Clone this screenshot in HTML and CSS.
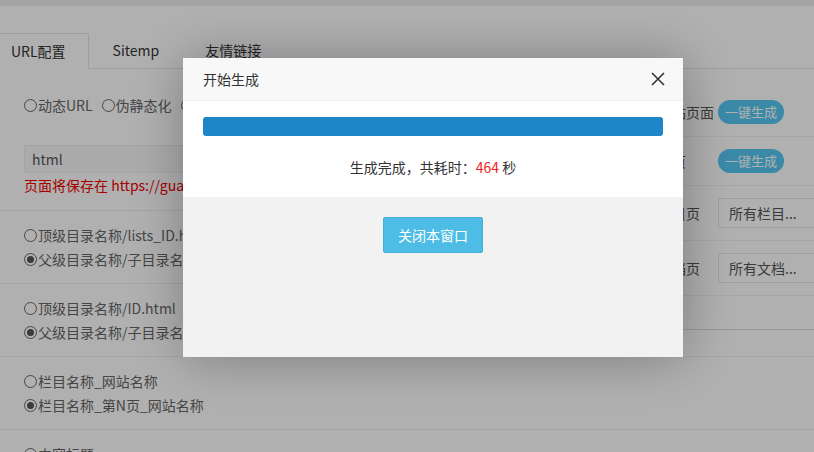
FILE: index.html
```html
<!DOCTYPE html>
<html lang="zh-CN">
<head>
<meta charset="utf-8">
<title>URL配置</title>
<link rel="stylesheet" href="styles.css">
</head>
<body>
<div class="topbar"></div>
<div class="page">
  <ul class="tabs">
    <li class="tab active">URL配置</li>
    <li class="tab">Sitemp</li>
    <li class="tab">友情链接</li>
  </ul>
  <div class="content">
    <div class="row row-first">
      <div class="line">
        <label class="opt"><span class="radio"></span>动态URL</label>
        <label class="opt"><span class="radio"></span>伪静态化</label>
        <label class="opt"><span class="radio on"></span>生成静态</label>
      </div>
      <div class="input">html</div>
      <div class="line red">页面将保存在 https://guanwang.cn/html/</div>
    </div>
    <div class="row">
      <div class="line"><label class="opt"><span class="radio"></span>顶级目录名称/lists_ID.html</label></div>
      <div class="line"><label class="opt"><span class="radio on"></span>父级目录名称/子目录名称/lists_ID.html</label></div>
    </div>
    <div class="row">
      <div class="line"><label class="opt"><span class="radio"></span>顶级目录名称/ID.html</label></div>
      <div class="line"><label class="opt"><span class="radio on"></span>父级目录名称/子目录名称/ID.html</label></div>
    </div>
    <div class="row">
      <div class="line"><label class="opt"><span class="radio"></span>栏目名称_网站名称</label></div>
      <div class="line"><label class="opt"><span class="radio on"></span>栏目名称_第N页_网站名称</label></div>
    </div>
    <div class="row">
      <div class="line"><label class="opt"><span class="radio"></span>内容标题</label></div>
      <div class="line"><label class="opt"><span class="radio on"></span>内容标题_栏目名称_网站名称</label></div>
    </div>

    <aside class="side">
      <div class="side-row"><span class="side-label">生成全站页面</span><span class="pill">一键生成</span></div>
      <div class="side-row"><span class="side-label">生成首页</span><span class="pill">一键生成</span></div>
      <div class="side-row"><span class="side-label">生成栏目页</span><span class="select">所有栏目...</span></div>
      <div class="side-row"><span class="side-label">生成文档页</span><span class="select">所有文档...</span></div>
    </aside>
  </div>
</div>

<div class="mask"></div>
<div class="layer">
  <div class="layer-title">开始生成
    <svg class="close" width="14" height="14" viewBox="0 0 14 14"><path d="M1 1 L13 13 M13 1 L1 13" stroke="#333" stroke-width="1.6" fill="none"/></svg>
  </div>
  <div class="layer-body">
    <div class="bar"></div>
    <div class="done">生成完成，共耗时：<span class="num">464</span> 秒</div>
  </div>
  <div class="layer-foot">
    <span class="btn">关闭本窗口</span>
  </div>
</div>
</body>
</html>
```

FILE: styles.css
```css
* { box-sizing: border-box; }
html, body { margin: 0; padding: 0; }
body {
  background: #fff;
  font-family: "Noto Sans CJK SC", "Noto Sans", sans-serif;
  font-size: 14px;
  color: #666;
  overflow: hidden;
  width: 814px;
  height: 452px;
}
.topbar { height: 6px; background: #eee; }
.page { padding-top: 27px; }
.tabs {
  list-style: none;
  margin: 0 0 0 -12px;
  padding: 0;
  display: flex;
  height: 36px;
  border-bottom: 1px solid #e6e6e6;
}
.tab {
  height: 36px;
  line-height: 34px;
  padding: 0 22px;
  color: #333;
  font-size: 14px;
  margin-right: 2px;
}
.tab.active {
  background: #fff;
  border: 1px solid #e2e2e2;
  border-bottom-color: #fff;
  border-radius: 2px 2px 0 0;
  height: 36px;
}
.content { position: relative; }
.row {
  padding: 12px 24px;
  border-bottom: 1px solid #eee;
}
.row-first { padding-top: 24px; padding-bottom: 13px; }
.line {
  height: 24px;
  line-height: 24px;
  white-space: nowrap;
  display: flex;
  align-items: center;
}
.opt { display: inline-flex; align-items: center; margin-right: 9px; }
.radio {
  width: 13px;
  height: 13px;
  border: 1px solid #666;
  border-radius: 50%;
  display: inline-flex;
  align-items: center;
  justify-content: center;
  margin-right: 1px;
  background: #fff;
}
.radio.on::after {
  content: "";
  width: 7px;
  height: 7px;
  border-radius: 50%;
  background: #555;
}
.input {
  margin-top: 28px;
  width: 420px;
  height: 28px;
  line-height: 26px;
  border: 1px solid #eee;
  background: #f8f8f8;
  border-radius: 2px;
  padding: 0 7px;
  color: #555;
}
.red { color: #e00; }

.side {
  position: absolute;
  top: 19px;
  right: 0;
  width: 200px;
  background: #fff;
  padding: 0 0 33px 16px;
  border-bottom: 1px solid #ddd;
}
.side-row {
  display: flex;
  align-items: center;
  padding: 12px 0;
  border-bottom: 1px solid #f0f0f0;
}
.side-label { width: 88px; flex: none; color: #555; white-space: nowrap; }
.pill {
  display: inline-block;
  width: 66px;
  height: 24px;
  line-height: 24px;
  border-radius: 12px;
  background: #55c8f2;
  color: #fff;
  font-size: 13px;
  text-align: center;
}
.select {
  flex: none;
  width: 120px;
  height: 30px;
  line-height: 28px;
  border: 1px solid #e6e6e6;
  border-radius: 2px;
  padding: 0 10px;
  color: #555;
  white-space: nowrap;
}

.mask {
  position: fixed;
  inset: 0;
  background: rgba(0, 0, 0, 0.31);
}
.layer {
  position: fixed;
  left: 183px;
  top: 58px;
  width: 500px;
  height: 299px;
  background: #fff;
  box-shadow: 1px 1px 50px rgba(0, 0, 0, 0.3);
  display: flex;
  flex-direction: column;
}
.layer-title {
  position: relative;
  height: 43px;
  line-height: 42px;
  padding: 0 80px 0 20px;
  background: #f8f8f8;
  border-bottom: 1px solid #eee;
  color: #333;
  font-size: 14px;
}
.close { position: absolute; right: 18px; top: 14px; }
.layer-body { padding: 16px 20px 18px; background: #fff; }
.bar {
  height: 19px;
  background: #1e85c8;
  border-radius: 3px;
}
.done {
  margin-top: 19px;
  height: 24px;
  line-height: 24px;
  text-align: center;
  color: #333;
}
.num { color: #e22; }
.layer-foot {
  flex: 1;
  background: #f2f2f2;
  display: flex;
  justify-content: center;
  align-items: flex-start;
  padding-top: 20px;
}
.btn {
  width: 100px;
  height: 36px;
  line-height: 34px;
  text-align: center;
  background: #4dbde6;
  border: 1px solid #42b0d8;
  border-radius: 2px;
  color: #fff;
  font-size: 14px;
}
```
